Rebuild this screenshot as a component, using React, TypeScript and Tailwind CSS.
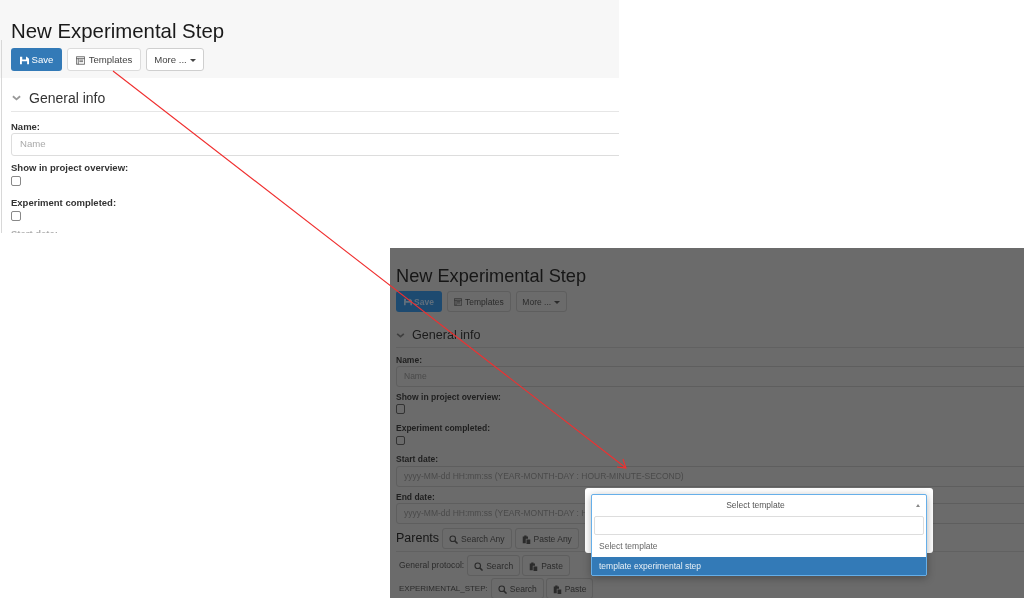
const font = "font-['Liberation_Sans',Arial,sans-serif]";

function FloppyIcon({ className }: { className: string }) {
  return (
    <svg viewBox="0 0 12 12" className={className} fill="currentColor">
      <path d="M0 1h9l3 2.5V11H0zM3 1v3.5h5V1zM2.5 7v4h7V7z" fillRule="evenodd" />
    </svg>
  );
}

function ListIcon({ className }: { className: string }) {
  return (
    <svg viewBox="0 0 12 12" className={className} fill="none" stroke="currentColor" strokeWidth="1">
      <path d="M.5 1h11v10H.5zM.5 3.5h11M3 3.5V11M4.5 5.5h5M4.5 7.5h5" />
    </svg>
  );
}

function SearchIcon() {
  return (
    <svg viewBox="0 0 12 12" className="h-[9px] w-[9px]" fill="none" stroke="currentColor" strokeWidth="1.5">
      <circle cx="5" cy="5" r="3.7" />
      <path d="M7.8 7.8 11.4 11.4" strokeWidth="2" />
    </svg>
  );
}

function PasteIcon() {
  return (
    <svg viewBox="0 0 12 12" className="h-[9px] w-[9px]" fill="currentColor">
      <path d="M1 2h2V.8h3V2h2v3H5v6H1zM6 6h5v6H6z" />
    </svg>
  );
}

function Caret() {
  return <span className="ml-[3px] h-0 w-0 border-x-[3px] border-t-[3px] border-x-transparent border-t-current" />;
}

function Chevron({ className }: { className: string }) {
  return (
    <svg viewBox="0 0 10 6" className={className} fill="none" stroke="currentColor" strokeWidth="2">
      <path d="M1 1l4 3.5L9 1" />
    </svg>
  );
}

function DarkButton({ icon, label }: { icon: React.ReactNode; label: string }) {
  return (
    <div className="flex h-[21px] items-center gap-[3px] rounded-[3px] border border-[#5e5e5e] bg-[#6b6b6b] px-[6px] pt-px text-[8.5px] text-[#2b2b2b]">
      {icon}
      {label}
    </div>
  );
}

function TopLabel({ text, className }: { text: string; className: string }) {
  return <p className={`text-[9.5px] font-bold leading-[11px] text-[#333] ${className}`}>{text}</p>;
}

function TopPanel() {
  return (
    <section className="absolute left-0 top-0 flex h-[233px] w-[619px] flex-col overflow-hidden bg-white">
      <div className="h-[78px] shrink-0 bg-[#f7f7f7] pl-[11px] pt-[19px]">
        <h1 className="text-[20.4px] leading-[25px] text-[#1a1a1a]">New Experimental Step</h1>
        <div className="mt-[4px] flex gap-[5px] text-[9.6px]">
          <div className="flex h-[23px] w-[51px] items-center justify-center gap-[3px] rounded-[3px] bg-[#337ab7] pt-px text-white">
            <FloppyIcon className="h-[9px] w-[9px]" />
            Save
          </div>
          <div className="flex h-[23px] w-[74px] items-center justify-center gap-1 rounded-[3px] border border-[#dcdcdc] bg-white pt-px text-[#444]">
            <ListIcon className="h-[9px] w-[9px]" />
            Templates
          </div>
          <div className="flex h-[23px] w-[58px] items-center justify-center rounded-[3px] border border-[#cfcfcf] bg-white pt-px text-[#444]">
            More ...
            <Caret />
          </div>
        </div>
      </div>
      <div className="flex-1 pl-[11px]">
        <div className="flex h-[34px] items-center gap-[8px] border-b border-[#e6e6e6] pl-px pt-[7px] text-[14px] text-[#333]">
          <Chevron className="h-[6px] w-[9px] text-[#999]" />
          General info
        </div>
        <TopLabel text="Name:" className="mt-[9px]" />
        <div className="-mr-[6px] mt-[1px] flex h-[23px] items-center rounded-[3px] border border-[#ddd] pl-[8px] text-[9.6px] text-[#aaa]">Name</div>
        <TopLabel text="Show in project overview:" className="mt-[6px]" />
        <div className="mt-[3px] h-[10px] w-[10px] rounded-[2px] border border-[#888]" />
        <TopLabel text="Experiment completed:" className="mt-[11px]" />
        <div className="mt-[3px] h-[10px] w-[10px] rounded-[2px] border border-[#888]" />
        <TopLabel text="Start date:" className="mt-[7px] opacity-40" />
      </div>
      <span className="absolute left-[1px] top-[40px] h-[193px] w-px bg-[#d8d8d8]" />
    </section>
  );
}

function DarkLabel({ text, className }: { text: string; className: string }) {
  return <p className={`text-[8.5px] font-bold leading-[10px] text-[#1f1f1f] ${className}`}>{text}</p>;
}

function DarkInput({ text, className }: { text: string; className: string }) {
  return (
    <div className={`-mr-[6px] flex h-[21px] items-center overflow-hidden whitespace-nowrap rounded-[3px] border border-[#5e5e5e] pl-[7px] text-[8.5px] text-[#4a4a4a] ${className}`}>
      {text}
    </div>
  );
}

function BottomPanel() {
  return (
    <section className="absolute left-[390px] top-[248px] h-[350px] w-[634px] overflow-hidden bg-[#6b6b6b] pl-[6px] pt-[17px]">
      <h2 className="text-[18.2px] leading-[22px] text-[#161616]">New Experimental Step</h2>
      <div className="mt-[4px] flex gap-[5px]">
        <div className="flex h-[21px] w-[46px] items-center justify-center gap-[2px] rounded-[3px] bg-[#1d4a70] pt-px text-[8.5px] font-bold text-[#5f6f7d]">
          <FloppyIcon className="h-[8px] w-[8px]" />
          Save
        </div>
        <DarkButton icon={<ListIcon className="h-[8px] w-[8px]" />} label="Templates" />
        <div className="flex h-[21px] w-[51px] items-center justify-center rounded-[3px] border border-[#5e5e5e] pt-px text-[8.5px] text-[#2b2b2b]">
          More ...
          <Caret />
        </div>
      </div>
      <div className="flex h-[36px] items-center gap-[7px] border-b border-[#616161] pt-[11px] text-[12.6px] text-[#1b1b1b]">
        <Chevron className="h-[5px] w-[9px] text-[#3f3f3f]" />
        General info
      </div>
      <DarkLabel text="Name:" className="mt-[7px]" />
      <DarkInput text="Name" className="mt-px" />
      <DarkLabel text="Show in project overview:" className="mt-[5px]" />
      <div className="mt-[2px] h-[10px] w-[9px] rounded-[2px] border border-[#333]" />
      <DarkLabel text="Experiment completed:" className="mt-[9px]" />
      <div className="mt-[3px] h-[9px] w-[9px] rounded-[2px] border border-[#333]" />
      <DarkLabel text="Start date:" className="mt-[9px]" />
      <DarkInput text="yyyy-MM-dd HH:mm:ss (YEAR-MONTH-DAY : HOUR-MINUTE-SECOND)" className="mt-[2px]" />
      <DarkLabel text="End date:" className="mt-[5px]" />
      <DarkInput text="yyyy-MM-dd HH:mm:ss (YEAR-MONTH-DAY : HOUR-MINUTE-SECOND)" className="mt-px" />
      <div className="mt-[4px] flex items-center gap-[3px] border-b border-[#616161] pb-[2px]">
        <span className="text-[12.5px] text-[#161616]">Parents</span>
        <DarkButton icon={<SearchIcon />} label="Search Any" />
        <DarkButton icon={<PasteIcon />} label="Paste Any" />
      </div>
      <div className="mt-[3px] flex items-center gap-[2px] pl-[3px] text-[8.5px] text-[#2b2b2b]">
        <span className="mr-px">General protocol:</span>
        <DarkButton icon={<SearchIcon />} label="Search" />
        <DarkButton icon={<PasteIcon />} label="Paste" />
      </div>
      <div className="mt-[2px] flex items-center gap-[2px] pl-[3px] text-[8px] text-[#2b2b2b]">
        <span className="mr-px">EXPERIMENTAL_STEP:</span>
        <DarkButton icon={<SearchIcon />} label="Search" />
        <DarkButton icon={<PasteIcon />} label="Paste" />
      </div>
    </section>
  );
}

function TemplateDialog() {
  return (
    <div className="absolute left-[585px] top-[488px] h-[65px] w-[348px] rounded-[3px] bg-white pl-[6px] pt-[6px] text-[8.5px]">
      <div className="w-[336px] rounded-[2px] border border-[#66afe9] bg-white shadow-[0_2px_8px_rgba(0,0,0,0.3)]">
        <div className="relative flex h-[21px] items-center justify-center pr-[7px] text-[#555]">
          Select template
          <span className="absolute right-[6px] top-[9px] h-0 w-0 border-x-[2.5px] border-b-[3px] border-x-transparent border-b-[#888]" />
        </div>
        <div className="mx-[2px] h-[19px] rounded-[2px] border border-[#ddd]" />
        <div className="flex h-[22px] items-center pl-[7px] pt-px text-[#666]">Select template</div>
        <div className="flex h-[18px] items-center bg-[#337ab7] pl-[7px] pt-px text-[#e8f0f6]">template experimental step</div>
      </div>
    </div>
  );
}

export default function App() {
  return (
    <div className={`relative h-[598px] w-[1024px] overflow-hidden bg-white blur-[0.35px] ${font}`}>
      <TopPanel />
      <BottomPanel />
      <TemplateDialog />
      <svg className="absolute inset-0 h-full w-full" viewBox="0 0 1024 598" fill="none" stroke="#f03030" strokeWidth="1.1">
        <path d="M113 71 626 468M617 467l9 1-3-9" />
      </svg>
    </div>
  );
}
